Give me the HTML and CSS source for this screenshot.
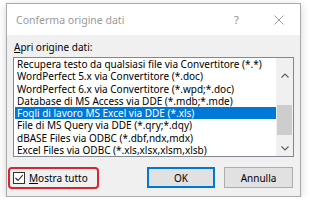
FILE: index.html
```html
<!DOCTYPE html>
<html lang="it">
<head>
<meta charset="utf-8">
<title>Conferma origine dati</title>
<link rel="stylesheet" href="styles.css">
</head>
<body>
<div class="dialog">
  <div class="titlebar">
    <span class="title">Conferma origine dati</span>
    <span class="help">?</span>
    <span class="close"><svg width="10" height="10" viewBox="0 0 10 10"><path d="M0.5 0.5L9.5 9.5M9.5 0.5L0.5 9.5" stroke="#9a9a9a" stroke-width="1" fill="none"/></svg></span>
  </div>
  <div class="body">
    <div class="label"><u>A</u>pri origine dati:</div>
    <div class="listbox">
      <ul class="items">
        <li>Recupera testo da qualsiasi file via Convertitore (*.*)</li>
        <li>WordPerfect 5.x via Convertitore (*.doc)</li>
        <li>WordPerfect 6.x via Convertitore (*.wpd;*.doc)</li>
        <li>Database di MS Access via DDE (*.mdb;*.mde)</li>
        <li class="selected">Fogli di lavoro MS Excel via DDE (*.xls)</li>
        <li>File di MS Query via DDE (*.qry;*.dqy)</li>
        <li>dBASE Files via ODBC (*.dbf,ndx,mdx)</li>
        <li>Excel Files via ODBC (*.xls,xlsx,xlsm,xlsb)</li>
      </ul>
      <div class="scrollbar">
        <div class="arrow up"><svg width="8" height="5" viewBox="0 0 8 5"><path d="M0.5 4.5L4 1L7.5 4.5" stroke="#606060" stroke-width="1.2" fill="none"/></svg></div>
        <div class="track"><div class="thumb"></div></div>
        <div class="arrow down"><svg width="8" height="5" viewBox="0 0 8 5"><path d="M0.5 0.5L4 4L7.5 0.5" stroke="#606060" stroke-width="1.2" fill="none"/></svg></div>
      </div>
    </div>
    <div class="footer">
      <div class="check">
        <span class="box"><svg width="10" height="10" viewBox="0 0 10 10"><path d="M1.5 5L4 7.5L8.8 2" stroke="#222" stroke-width="1.1" fill="none"/></svg></span>
        <span class="check-label"><u>M</u>ostra tutto</span>
      </div>
      <div class="annot"></div>
      <div class="buttons">
        <button class="btn default">OK</button>
        <button class="btn">Annulla</button>
      </div>
    </div>
  </div>
</div>
</body>
</html>
```
FILE: styles.css
```css
html, body {
  margin: 0;
  padding: 0;
  background: #ffffff;
}
body {
  font-family: "Noto Sans", "Open Sans", sans-serif;
  font-size: 10px;
  color: #000;
}
.dialog {
  box-sizing: border-box;
  margin: 3px 0 0 6px;
  width: 295px;
  height: 194px;
  border: 1px solid #aaaaaa;
  background: #f0f0f0;
  box-shadow: 0 2px 8px rgba(0,0,0,0.18);
  display: flex;
  flex-direction: column;
}
.titlebar {
  height: 31px;
  background: #ffffff;
  display: flex;
  align-items: center;
  padding-left: 9px;
  color: #999999;
  font-size: 10.5px;
}
.title {
  flex: 1;
}
.help {
  font-size: 11px;
  color: #8f8f8f;
  width: 14px;
}
.close {
  display: flex;
  width: 10px;
  margin: 0 16px 0 26px;
}
.body {
  flex: 1;
  padding: 4px 6px 0 6px;
}
.label {
  line-height: 16px;
  padding-left: 1px;
  margin-bottom: 2px;
}
.listbox {
  box-sizing: border-box;
  height: 100px;
  border: 1px solid #828790;
  background: #fff;
  display: flex;
}
.items {
  list-style: none;
  margin: 0;
  padding: 0 0 0 1px;
  flex: 1;
}
.items li {
  height: 12.25px;
  line-height: 12.25px;
  padding-left: 2px;
  white-space: nowrap;
}
.items li.selected {
  background: #0078d7;
  color: #fff;
}
.scrollbar {
  width: 17px;
  background: #f0f0f0;
  display: flex;
  flex-direction: column;
}
.arrow {
  display: flex;
  justify-content: center;
}
.arrow.up {
  height: 34px;
  align-items: center;
}
.arrow.down {
  height: 15px;
  align-items: center;
}
.track {
  flex: 1;
  padding: 13px 1px 0 1px;
}
.thumb {
  height: 30px;
  background: #cdcdcd;
}
.footer {
  position: relative;
  display: flex;
  align-items: center;
  margin-top: 10px;
}
.check {
  display: flex;
  align-items: center;
  gap: 4px;
}
.box {
  box-sizing: border-box;
  width: 12px;
  height: 12px;
  border: 1px solid #333;
  background: #fff;
  display: flex;
  align-items: center;
  justify-content: center;
}
.annot {
  position: absolute;
  left: -5px;
  top: -0.5px;
  width: 91px;
  height: 22px;
  box-sizing: border-box;
  border: 2px solid #d8262e;
  border-radius: 4px;
}
.buttons {
  margin-left: auto;
  display: flex;
  gap: 9px;
  margin-right: 1px;
}
.btn {
  box-sizing: border-box;
  height: 21px;
  width: 69px;
  font-family: inherit;
  font-size: 10px;
  color: #000;
  background: #e1e1e1;
  border: 1px solid #adadad;
  border-radius: 0;
  padding: 0;
}
.btn.default {
  width: 68px;
  border: 2px solid #0078d7;
}
```
